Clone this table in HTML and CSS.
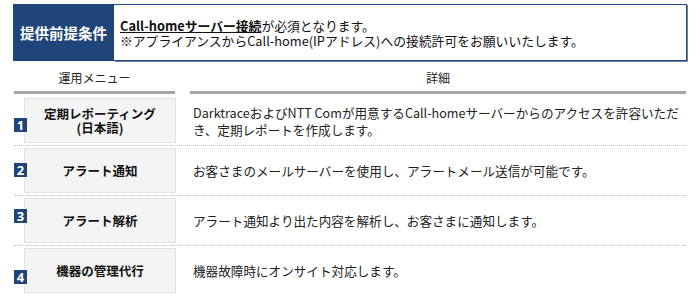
FILE: index.html
```html
<!DOCTYPE html>
<html lang="ja">
<head>
<meta charset="utf-8">
<link rel="stylesheet" href="styles.css">
</head>
<body>
<div class="page">
  <div class="notice">
    <div class="notice-label">提供前提条件</div>
    <div class="notice-body">
      <p><span class="em">Call-homeサーバー接続</span>が必須となります。</p>
      <p>※アプライアンスからCall-home(IPアドレス)への接続許可をお願いいたします。</p>
    </div>
  </div>

  <div class="table">
    <div class="thead">
      <div class="th th-menu">運用メニュー</div>
      <div class="th th-detail">詳細</div>
    </div>

    <div class="row">
      <div class="menu">
        <span class="badge b1">1</span>
        <div class="menu-box">定期レポーティング<br>(日本語)</div>
      </div>
      <div class="detail">DarktraceおよびNTT Comが用意するCall-homeサーバーからのアクセスを許容いただき、定期レポートを作成します。</div>
    </div>

    <div class="row">
      <div class="menu">
        <span class="badge b2">2</span>
        <div class="menu-box">アラート通知</div>
      </div>
      <div class="detail">お客さまのメールサーバーを使用し、アラートメール送信が可能です。</div>
    </div>

    <div class="row">
      <div class="menu">
        <span class="badge b3">3</span>
        <div class="menu-box">アラート解析</div>
      </div>
      <div class="detail">アラート通知より出た内容を解析し、お客さまに通知します。</div>
    </div>

    <div class="row last">
      <div class="menu">
        <span class="badge b4">4</span>
        <div class="menu-box">機器の管理代行</div>
      </div>
      <div class="detail">機器故障時にオンサイト対応します。</div>
    </div>
  </div>
</div>
</body>
</html>
```

FILE: styles.css
```css
* { box-sizing: border-box; }
html, body { margin: 0; padding: 0; background: #fff; }
body {
  font-family: "Noto Sans CJK JP", "Noto Sans", sans-serif;
  color: #222;
  width: 700px;
  height: 300px;
  overflow: hidden;
}
.page { padding: 4px 0 0 13px; width: 688px; }

.notice { display: flex; height: 57px; width: 674px; }
.notice-label {
  flex: 0 0 101px;
  background: #1f4477;
  color: #fff;
  font-weight: 700;
  font-size: 14.5px;
  display: flex;
  align-items: center;
  justify-content: center;
}
.notice-body {
  flex: 1;
  border: 1px solid #23497e;
  border-left: none;
  box-shadow: 1px 1px 0 #6a84aa;
  padding: 0 6px;
  display: flex;
  flex-direction: column;
  justify-content: center;
  font-size: 12.8px;
  line-height: 15px;
  color: #111;
}
.notice-body p { margin: 0; }
.em { font-weight: 700; text-decoration: underline; }

.table { margin: 9px 0 0 1px; width: 672px; }
.thead { display: flex; gap: 15px; margin-bottom: 2px; }
.th {
  font-size: 12px;
  line-height: 16px;
  text-align: center;
  padding-bottom: 5px;
  border-bottom: 3px solid #a5a5a5;
  color: #222;
}
.th-menu { flex: 0 0 161px; }
.th-detail { flex: 1; }

.row {
  display: flex;
  align-items: center;
  padding: 2px 0;
  border-bottom: 1px dotted #c4c4c4;
}
.row.last { border-bottom: none; }

.menu { flex: 0 0 162px; display: flex; align-self: stretch; }
.badge {
  position: relative;
  z-index: 1;
  flex: 0 0 13px;
  height: 14px;
  margin-right: -3px;
  background: #1f4477;
  color: #fff;
  font-family: "Noto Sans", sans-serif;
  font-weight: 700;
  font-size: 13px;
  line-height: 14px;
  text-align: center;
}
.b1 { margin-top: 20px; }
.b2 { margin-top: 15px; }
.b3 { margin-top: 11px; }
.b4 { margin-top: 22px; }
.menu-box {
  flex: 1;
  height: 45px;
  background: #f4f4f4;
  border: 1px solid #e2e2e2;
  display: flex;
  align-items: center;
  justify-content: center;
  text-align: center;
  font-weight: 700;
  font-size: 12.5px;
  line-height: 14px;
  color: #111;
}
.detail {
  flex: 1;
  padding-left: 17px;
  font-size: 12.6px;
  line-height: 17px;
  color: #222;
}
```
